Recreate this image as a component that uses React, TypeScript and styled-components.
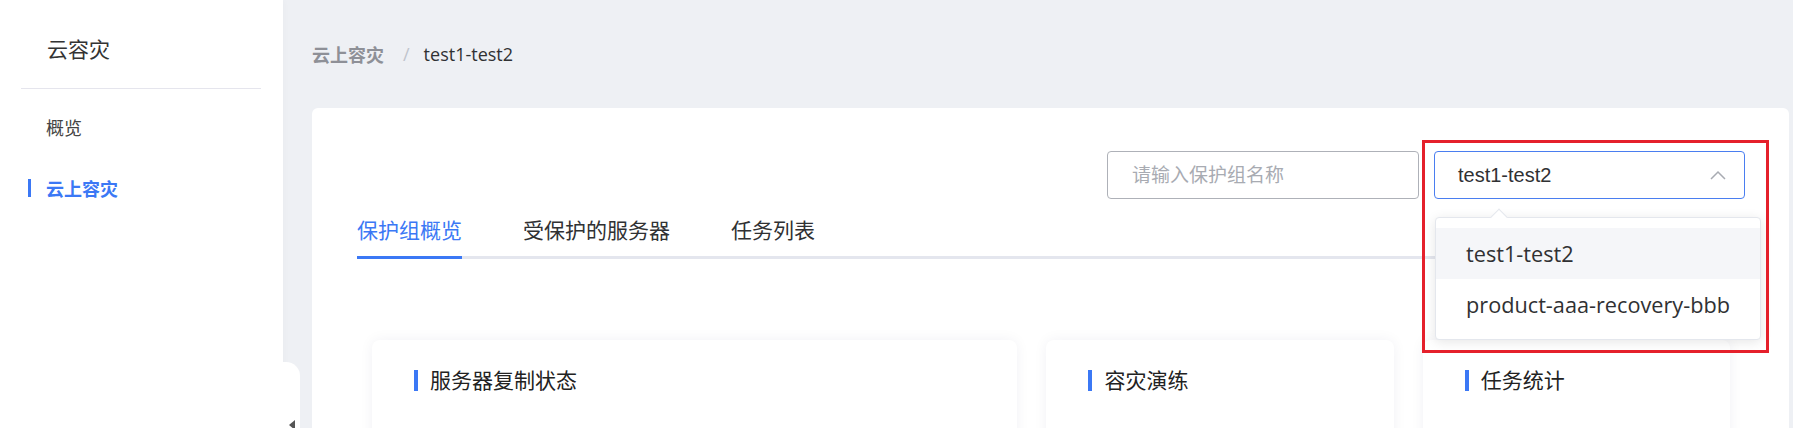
import styled, { createGlobalStyle } from "styled-components";

const GlobalStyle = createGlobalStyle`
  html, body {
    margin: 0;
    padding: 0;
    height: 100%;
    overflow: hidden;
    background: #eef0f4;
  }
  body {
    font-family: "Open Sans", "Noto Sans CJK SC", sans-serif;
    color: #303133;
  }
  * {
    box-sizing: border-box;
  }
`;

const Layout = styled.div`
  display: flex;
  height: 100vh;
  width: 100%;
`;

const Sidebar = styled.aside`
  position: relative;
  flex: 0 0 283px;
  background: #fff;
  box-shadow: 2px 0 6px rgba(0, 0, 0, 0.02);
  z-index: 2;
`;

const SidebarTitle = styled.div`
  height: 88px;
  padding: 8px 0 0 47px;
  display: flex;
  align-items: center;
  font-size: 21px;
  color: #333;
`;

const Divider = styled.div`
  height: 1px;
  margin: 0 22px 0 21px;
  background: #e5e5ed;
`;

const Menu = styled.ul`
  list-style: none;
  margin: 0;
  padding: 7px 0 0;
`;

const MenuItem = styled.li<{ $active?: boolean }>`
  position: relative;
  height: 61px;
  display: flex;
  align-items: center;
  padding-left: 46px;
  font-size: 18px;
  font-weight: ${(p) => (p.$active ? 700 : 400)};
  color: ${(p) => (p.$active ? "#3b78f5" : "#444")};

  &::before {
    content: "";
    display: ${(p) => (p.$active ? "block" : "none")};
    position: absolute;
    left: 28px;
    top: 50%;
    width: 3px;
    height: 18px;
    margin-top: -9px;
    background: #3b78f5;
  }
`;

// little tab hanging off the sidebar edge that folds the menu away
const CollapseHandle = styled.button`
  position: absolute;
  right: -17px;
  top: 362px;
  width: 17px;
  height: 120px;
  padding: 0;
  border: none;
  background: #fff;
  border-top-right-radius: 14px;
  cursor: pointer;
  display: flex;
  justify-content: center;
  align-items: flex-start;
  padding-top: 58px;

  &::after {
    content: "";
    width: 0;
    height: 0;
    border-top: 5px solid transparent;
    border-bottom: 5px solid transparent;
    border-right: 6px solid #555;
  }
`;

const Main = styled.main`
  flex: 1;
  min-width: 0;
  padding: 0 4px 0 29px;
`;

const Breadcrumb = styled.nav`
  height: 108px;
  display: flex;
  align-items: center;
  font-size: 18px;
`;

const Crumb = styled.span<{ $current?: boolean }>`
  font-weight: ${(p) => (p.$current ? 400 : 700)};
  color: ${(p) => (p.$current ? "#303133" : "#8e9097")};
`;

const Separator = styled.span`
  margin: 0 14px 0 19px;
  color: #c0c4cc;
`;

const Panel = styled.section`
  background: #fff;
  border-radius: 6px 6px 0 0;
  padding-top: 43px;
  min-height: 400px;
`;

const PanelHeader = styled.div`
  padding: 0 44px 0 45px;
`;

const Toolbar = styled.div`
  display: flex;
  justify-content: flex-end;
  gap: 15px;
`;

const SearchInput = styled.input`
  width: 312px;
  height: 48px;
  padding: 0 24px;
  border: 1px solid #aeb1b8;
  border-radius: 4px;
  font-family: "Open Sans", "Noto Sans CJK SC", sans-serif;
  font-size: 19px;
  color: #303133;
  outline: none;

  &::placeholder {
    color: #a8abb2;
  }
`;

const SelectWrap = styled.div`
  position: relative;
  width: 311px;
`;

const SelectBox = styled.div`
  height: 48px;
  padding: 0 18px 0 23px;
  border: 1px solid #4a7ef0;
  border-radius: 4px;
  display: flex;
  align-items: center;
  justify-content: space-between;
  font-family: "Liberation Sans", Arial, sans-serif;
  font-size: 20px;
  color: #303133;
  cursor: pointer;
`;

const Dropdown = styled.ul`
  position: absolute;
  left: 1px;
  top: 66px;
  width: 326px;
  margin: 0;
  padding: 10px 0 9px;
  list-style: none;
  background: #fff;
  border: 1px solid #e4e7ed;
  border-radius: 4px;
  box-shadow: 0 2px 12px rgba(0, 0, 0, 0.1);
  z-index: 5;

  &::before {
    content: "";
    position: absolute;
    left: 57px;
    top: -7px;
    width: 11px;
    height: 11px;
    background: #fff;
    border-top: 1px solid #e4e7ed;
    border-left: 1px solid #e4e7ed;
    transform: rotate(45deg);
  }
`;

const Option = styled.li<{ $hover?: boolean }>`
  height: 51px;
  padding-left: 30px;
  display: flex;
  align-items: center;
  font-size: 21.7px;
  color: #303133;
  background: ${(p) => (p.$hover ? "#f5f6f9" : "transparent")};
  cursor: pointer;
`;

// red frame marking the group switcher
const Highlight = styled.div`
  position: absolute;
  left: -12px;
  top: -11px;
  width: 347px;
  height: 213px;
  border: 3px solid #e5202b;
  pointer-events: none;
  z-index: 6;
`;

const TabBar = styled.div`
  display: flex;
  gap: 61px;
  margin-top: 16px;
  box-shadow: inset 0 -3px 0 #e4e6ee;
`;

const Tab = styled.div<{ $active?: boolean }>`
  padding-bottom: 11px;
  line-height: 30px;
  font-size: 21px;
  color: ${(p) => (p.$active ? "#3b78f5" : "#303133")};
  border-bottom: 3px solid ${(p) => (p.$active ? "#3b78f5" : "transparent")};
  cursor: pointer;
`;

const CardGrid = styled.div`
  display: grid;
  grid-template-columns: 645fr 347fr 307fr;
  gap: 29px;
  padding: 0 59px 0 60px;
  margin-top: 81px;
`;

const Card = styled.div`
  min-height: 220px;
  padding: 30px 42px;
  background: #fff;
  border-radius: 8px;
  box-shadow: 0 0 14px rgba(30, 40, 80, 0.06);
`;

const CardTitle = styled.h3`
  margin: 0;
  display: flex;
  align-items: center;
  gap: 12px;
  font-size: 21px;
  font-weight: 400;
  line-height: 21px;
  color: #222;

  &::before {
    content: "";
    width: 4px;
    height: 21px;
    background: #3b78f5;
  }
`;

const ChevronUp = () => (
  <svg width="16" height="10" viewBox="0 0 16 10" fill="none">
    <polyline points="1,9 8,2 15,9" stroke="#a8abb2" strokeWidth="1.5" />
  </svg>
);

const groups = ["test1-test2", "product-aaa-recovery-bbb"];

const App = () => {
  return (
    <>
      <GlobalStyle />
      <Layout>
        <Sidebar>
          <SidebarTitle>云容灾</SidebarTitle>
          <Divider />
          <Menu>
            <MenuItem>概览</MenuItem>
            <MenuItem $active>云上容灾</MenuItem>
          </Menu>
          <CollapseHandle aria-label="collapse" />
        </Sidebar>
        <Main>
          <Breadcrumb>
            <Crumb>云上容灾</Crumb>
            <Separator>/</Separator>
            <Crumb $current>test1-test2</Crumb>
          </Breadcrumb>
          <Panel>
            <PanelHeader>
              <Toolbar>
                <SearchInput placeholder="请输入保护组名称" />
                <SelectWrap>
                  <SelectBox>
                    <span>test1-test2</span>
                    <ChevronUp />
                  </SelectBox>
                  <Dropdown>
                    {groups.map((name, i) => (
                      <Option key={name} $hover={i === 0}>
                        {name}
                      </Option>
                    ))}
                  </Dropdown>
                  <Highlight />
                </SelectWrap>
              </Toolbar>
              <TabBar>
                <Tab $active>保护组概览</Tab>
                <Tab>受保护的服务器</Tab>
                <Tab>任务列表</Tab>
              </TabBar>
            </PanelHeader>
            <CardGrid>
              <Card>
                <CardTitle>服务器复制状态</CardTitle>
              </Card>
              <Card>
                <CardTitle>容灾演练</CardTitle>
              </Card>
              <Card>
                <CardTitle>任务统计</CardTitle>
              </Card>
            </CardGrid>
          </Panel>
        </Main>
      </Layout>
    </>
  );
};

export default App;
